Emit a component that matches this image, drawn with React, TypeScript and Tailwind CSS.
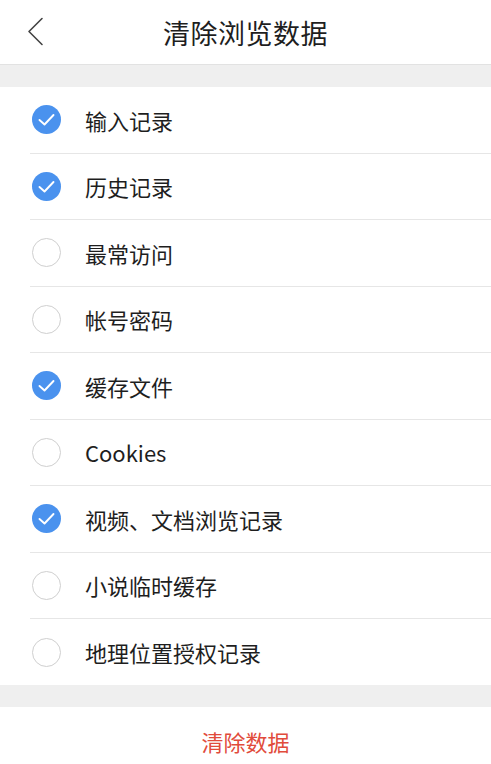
import React from "react";

const items: { label: string; checked: boolean }[] = [
  { label: "输入记录", checked: true },
  { label: "历史记录", checked: true },
  { label: "最常访问", checked: false },
  { label: "帐号密码", checked: false },
  { label: "缓存文件", checked: true },
  { label: "Cookies", checked: false },
  { label: "视频、文档浏览记录", checked: true },
  { label: "小说临时缓存", checked: false },
  { label: "地理位置授权记录", checked: false },
];

const font = { fontFamily: '"Noto Sans CJK SC", "Noto Sans", sans-serif' };

function Check({ checked }: { checked: boolean }) {
  if (checked) {
    return (
      <div className="w-[29px] h-[29px] rounded-full bg-[#4a92ee] flex items-center justify-center shrink-0">
        <svg width="29" height="29" viewBox="0 0 29 29" fill="none">
          <path d="M7.5 15 L12.5 19.5 L21.5 10" stroke="white" strokeWidth="1.9" strokeLinecap="round" strokeLinejoin="round" />
        </svg>
      </div>
    );
  }
  return <div className="w-[29px] h-[29px] rounded-full border-[1.5px] border-[#cfcfcf] bg-white shrink-0" />;
}

export default function App() {
  return (
    <div className="w-[491px] h-[764px] bg-white text-[#1e1e1e] overflow-hidden" style={font}>
      <div className="relative h-[65px] flex items-center justify-center border-b border-[#e2e2e2] bg-white">
        <svg className="absolute left-[27px] top-[17px]" width="17" height="29" viewBox="0 0 17 29" fill="none">
          <path d="M15 1.5 L2 14.5 L15 27.5" stroke="#444" strokeWidth="1.6" strokeLinecap="round" strokeLinejoin="round" />
        </svg>
        <span className="text-[27px] leading-none text-[#1e1e1e] tracking-[0.5px]">清除浏览数据</span>
      </div>
      <div className="h-[22px] bg-[#efefef]" />
      <div className="bg-white">
        {items.map((it, i) => (
          <div key={i} className="pl-[30px]">
            <div
              className={
                "flex items-center " +
                (i < items.length - 1 ? "h-[66.5px] border-b border-[#e6e6e6]" : "h-[66px]")
              }
            >
              <div className="ml-[2px]">
                <Check checked={it.checked} />
              </div>
              <span className="ml-[24px] text-[22px] leading-none text-[#1e1e1e]">{it.label}</span>
            </div>
          </div>
        ))}
      </div>
      <div className="h-[22px] bg-[#efefef]" />
      <div className="h-[56px] flex items-center justify-center bg-white">
        <span className="text-[22px] leading-none text-[#e14b3b] mt-[12px]">清除数据</span>
      </div>
    </div>
  );
}
